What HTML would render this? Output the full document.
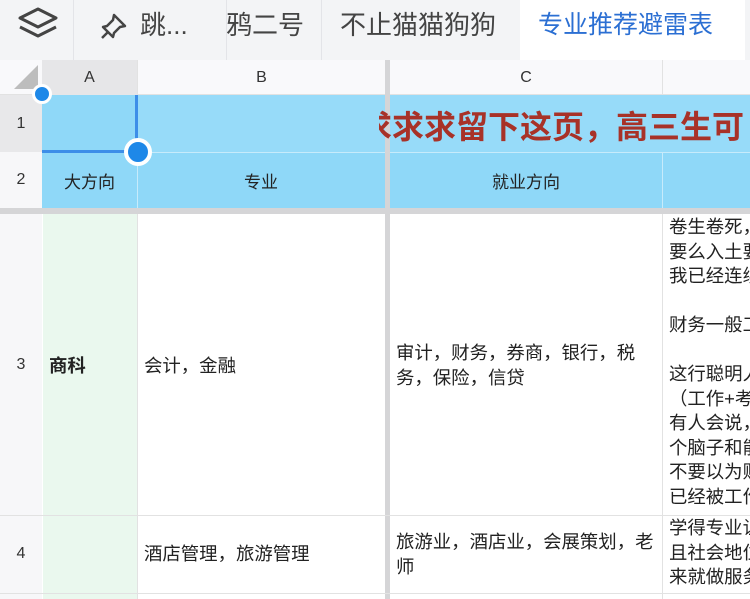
<!DOCTYPE html>
<html><head><meta charset="utf-8"><style>
*{margin:0;padding:0;box-sizing:border-box}
body{width:750px;height:599px;overflow:hidden;background:#fff;font-family:"Liberation Sans","Noto Sans CJK SC",sans-serif;color:#222;position:relative}
.a{position:absolute}
.tab{position:absolute;top:0;height:60px;line-height:50px;font-size:26px;color:#444}
.c{display:flex;align-items:center;justify-content:center}
.t{font-size:18.4px;line-height:24.5px;white-space:nowrap}
</style></head><body>
<div class="a" style="left:0;top:0;width:750px;height:60px;background:#f3f4f6"></div>
<div class="a" style="left:73px;top:0;width:1px;height:60px;background:#e3e4e8"></div>
<div class="a" style="left:226px;top:0;width:1px;height:60px;background:#e3e4e8"></div>
<div class="a" style="left:321px;top:0;width:1px;height:60px;background:#e3e4e8"></div>
<div class="a" style="left:520px;top:0;width:225px;height:60px;background:#fff"></div>
<svg class="a" style="left:14px;top:6px" width="48" height="36" viewBox="0 0 48 36" fill="none" stroke="#444" stroke-width="3" stroke-linejoin="round"><path d="M24 3 L42 12 L24 21 L6 12 Z"/><path d="M6 21 L24 30 L42 21"/></svg>
<svg class="a" style="left:100px;top:12px" width="28" height="28" viewBox="0 0 28 28" fill="none" stroke="#444" stroke-width="2.5" stroke-linejoin="round"><path d="M14 3 L25 14 L20 15 L14 21 L13 25 L3 15 L7 14 L13 8 Z"/><path d="M8 20 L2 26"/></svg>
<div class="tab" style="left:140px">跳...</div>
<div class="tab" style="left:226px">鸦二号</div>
<div class="tab" style="left:340px">不止猫猫狗狗</div>
<div class="tab" style="left:538px;color:#2b6fd3;font-size:25px">专业推荐避雷表</div>
<div class="a" style="left:0;top:60px;width:750px;height:35px;background:#f9f9fb;border-bottom:1px solid #e2e2e2"></div>
<div class="a c" style="left:42px;top:60px;width:95px;height:35px;background:#e6e6e8;font-size:16px;color:#333">A</div>
<div class="a c" style="left:137px;top:60px;width:248px;height:35px;font-size:16px;color:#333;border-left:1px solid #e2e2e2">B</div>
<div class="a c" style="left:390px;top:60px;width:272px;height:35px;font-size:16px;color:#333">C</div>
<div class="a" style="left:662px;top:60px;width:1px;height:35px;background:#e2e2e2"></div>
<div class="a" style="left:14px;top:65px;width:0;height:0;border-left:24px solid transparent;border-bottom:24px solid #bdbdbd"></div>
<div class="a" style="left:0;top:95px;width:42px;height:504px;background:#f7f7f9"></div>
<div class="a c" style="left:0;top:95px;width:42px;height:57px;background:#e8e8ea;font-size:16px;color:#333">1</div>
<div class="a c" style="left:0;top:152px;width:42px;height:56px;font-size:16px;color:#333">2</div>
<div class="a c" style="left:0;top:214px;width:42px;height:301px;font-size:16px;color:#333">3</div>
<div class="a c" style="left:0;top:515px;width:42px;height:78px;font-size:16px;color:#333">4</div>
<div class="a" style="left:42px;top:95px;width:708px;height:113px;background:#8fd8f8"></div>
<div class="a" style="left:137px;top:95px;width:613px;height:57px;background:#97dbf9"></div>
<div class="a" style="left:42px;top:152px;width:708px;height:1px;background:#c7ebfb"></div>
<div class="a" style="left:137px;top:152px;width:1px;height:56px;background:#c7ebfb"></div>
<div class="a" style="left:662px;top:152px;width:1px;height:56px;background:#c7ebfb"></div>
<div class="a c" style="left:42px;top:152px;width:95px;height:56px;font-size:17px">大方向</div>
<div class="a c" style="left:137px;top:152px;width:248px;height:56px;font-size:17px">专业</div>
<div class="a c" style="left:390px;top:152px;width:272px;height:56px;font-size:17px">就业方向</div>
<div class="a" style="left:135px;top:95px;width:3px;height:57px;background:#3d8ee8"></div>
<div class="a" style="left:42px;top:150px;width:95px;height:3px;background:#3d8ee8"></div>
<div class="a" style="left:32px;top:84px;width:20px;height:20px;border-radius:50%;background:#1e88e8;border:3px solid #fff"></div>
<div class="a" style="left:124px;top:138px;width:28px;height:28px;border-radius:50%;background:#1e88e8;border:4px solid #fff"></div>
<div class="a" style="left:0;top:208px;width:750px;height:6px;background:#d5d5d7"></div>
<div class="a" style="left:385px;top:60px;width:5px;height:539px;background:#d5d5d7"></div>
<div class="a" style="left:379px;top:105px;width:371px;height:44px;overflow:hidden"><div style="position:absolute;left:-19px;top:0;font-size:32px;line-height:44px;color:#a83228;white-space:nowrap;font-weight:bold">求求求留下这页，高三生可</div></div>
<div class="a" style="left:43px;top:214px;width:94px;height:385px;background:#eaf8ee"></div>
<div class="a" style="left:137px;top:214px;width:1px;height:385px;background:#e2e2e2"></div>
<div class="a" style="left:662px;top:214px;width:1px;height:385px;background:#e2e2e2"></div>
<div class="a" style="left:0;top:515px;width:750px;height:1px;background:#e2e2e2"></div>
<div class="a" style="left:0;top:593px;width:750px;height:1px;background:#e2e2e2"></div>
<div class="a t" style="left:49px;top:354px;font-weight:bold">商科</div>
<div class="a t" style="left:144px;top:354px">会计，金融</div>
<div class="a t" style="left:144px;top:542px">酒店管理，旅游管理</div>
<div class="a t" style="left:396px;top:341px">审计，财务，券商，银行，税<br>务，保险，信贷</div>
<div class="a t" style="left:396px;top:530px">旅游业，酒店业，会展策划，老<br>师</div>
<div class="a t" style="left:669px;top:215px">卷生卷死，<br>要么入土要<br>我已经连续<br><br>财务一般工<br><br>这行聪明人<br>（工作+考<br>有人会说，<br>个脑子和能<br>不要以为财<br>已经被工作</div>
<div class="a t" style="left:669px;top:516px">学得专业让<br>且社会地位<br>来就做服务</div>
</body></html>
